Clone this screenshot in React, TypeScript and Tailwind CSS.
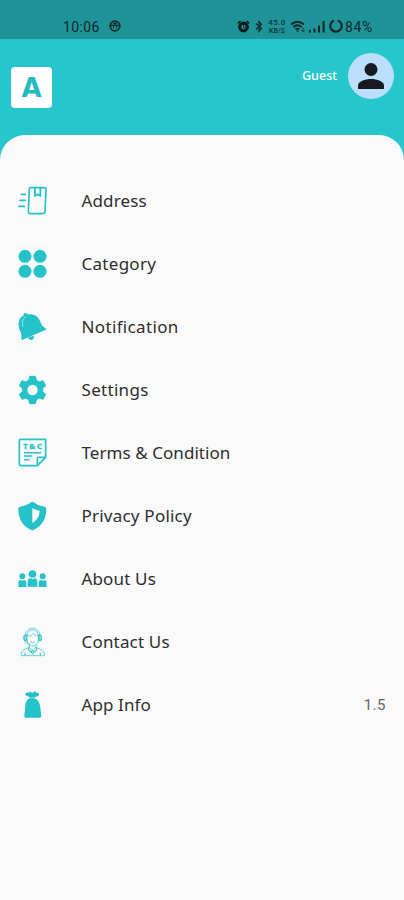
import type { ReactNode } from "react";

interface MenuItem {
  label: string;
  tracking: string;
  icon: ReactNode;
  value?: string;
}

const TEAL = "#26c2c9";

const AddressIcon = () => (
  <g fill="none" stroke={TEAL} strokeWidth={5} strokeLinecap="round" strokeLinejoin="round">
    <path d="M39 5h39q6 0 6 6l-3 65q-1 7-8 7H37q-6 0-6-7l3-65q0-6 5-6Z" />
    <path d="M51 5v25l8-5 8 5V5" strokeWidth={5.5} />
    <path d="M10 25h12M6 43h15M3 61h16" strokeWidth={5.5} />
  </g>
);

const CategoryIcon = () => (
  <g fill={TEAL}>
    <circle cx={21} cy={22} r={19.5} />
    <circle cx={66} cy={22} r={19.5} />
    <circle cx={21} cy={67} r={19.5} />
    <circle cx={66} cy={67} r={19.5} />
  </g>
);

const BellIcon = () => (
  <g>
    <path
      fill={TEAL}
      d="M17 6c3-4 9-4 11 1 17-3 33 5 38 20 4 11 8 17 17 22 3 2 2 4-1 5L14 83c-4 1-5-1-4-4 2-11-2-17-6-27C-1 35 2 16 16 11Z"
    />
    <path fill={TEAL} d="m30 77 17-6c3 5 0 10-4 12-5 2-11 0-13-6Z" />
    <path d="M15 43c-5-12-1-23 8-28" fill="none" stroke="#a9e8eb" strokeWidth={3} strokeLinecap="round" />
  </g>
);

const SettingsIcon = () => (
  <g fill={TEAL}>
    <path
      d="M35 4h17l3 12 9 5 11-4 8 15-9 8v10l9 8-8 15-11-4-9 5-3 12H35l-3-12-9-5-11 4-8-15 9-8V40l-9-8 8-15 11 4 9-5Z"
      stroke={TEAL}
      strokeWidth={3}
      strokeLinejoin="round"
    />
    <circle cx={43.5} cy={45} r={15.5} fill="#fafafa" />
  </g>
);

const TermsIcon = () => (
  <g fill="none" stroke={TEAL} strokeWidth={5} strokeLinejoin="round">
    <path d="M7 4h76v54L58 83H10q-6 0-6-6V8q0-4 3-4Z" />
    <path d="M83 58H61q-3 0-3 3v22" />
    <path d="M18 44h51M18 54h25M18 65h17" strokeWidth={4.5} />
    <text
      x={43.5}
      y={32}
      textAnchor="middle"
      textLength={56}
      fontSize={23}
      fontWeight={700}
      fill={TEAL}
      stroke={TEAL}
      strokeWidth={1}
    >
      T&amp;C
    </text>
  </g>
);

const PrivacyIcon = () => (
  <g>
    <path
      fill={TEAL}
      d="M39 4q4-3 8 0c9 7 20 12 33 13q5 1 5 6c0 29-11 50-37 63q-5 3-10 0C12 73 1 52 1 23q0-5 5-6C19 16 30 11 39 4Z"
    />
    <path fill="#fafafa" d="M43 21c7 5 13 7 22 8-1 17-8 29-22 37Z" />
  </g>
);

const AboutIcon = () => (
  <g fill={TEAL}>
    <circle cx={43.5} cy={30} r={11.5} />
    <circle cx={13} cy={37} r={9} />
    <circle cx={74} cy={37} r={9} />
    <path d="M29 68V53q0-10 10-10l5 3 5-3q9 0 9 10v15Z" />
    <path d="M1 69V57q0-9 8-9l4 3 4-3q8 0 8 9v12ZM62 69V57q0-9 8-9l4 3 4-3q8 0 8 9v12Z" />
  </g>
);

const ContactIcon = () => (
  <g fill="none" stroke={TEAL} strokeWidth={2.5} strokeLinecap="round" strokeLinejoin="round" opacity={0.85}>
    <path d="M22 24C24 10 33 4 44 4s20 7 22 20M27 24C30 13 35 9 44 9s14 4 17 15" />
    <path d="M27 23v14c0 11 8 20 17 20s17-9 17-20V23M28 27c9 1 15-2 19-8 3 5 8 8 13 8" />
    <path d="M25 24q-7-1-7 8t7 9ZM63 24q7-1 7 8t-7 9Z" strokeWidth={5} />
    <path d="M20 42q2 11 16 9M38 45q6 4 12 0" />
    <path d="M34 54v7l10 11 10-11v-7M34 61l-16 7q-9 4-9 18h71q0-14-10-18l-16-7" />
    <path d="m34 60-3 8 8 7 5-5 5 5 8-7-3-8M40 76l4 4 4-4M21 78v7M67 78v7" strokeWidth={3.5} />
  </g>
);

const InfoIcon = () => (
  <g fill={TEAL}>
    <path d="M36 23c-5-6-14-4-14-10 0-6 6-7 11-4 0-3 3-5 5-4l5 5 5-5c3-1 6 0 6 4 5-3 10 0 9 5-1 5-10 5-14 9Z" />
    <path d="M34 25h16c9 5 15 11 16 22l4 30q1 6-6 6H24q-6 0-5-6l3-30c1-11 4-17 12-22Z" />
  </g>
);

const items: MenuItem[] = [
  { label: "Address", tracking: "tracking-[0.12px]", icon: <AddressIcon /> },
  { label: "Category", tracking: "tracking-[0.28px]", icon: <CategoryIcon /> },
  { label: "Notification", tracking: "tracking-[0.35px]", icon: <BellIcon /> },
  { label: "Settings", tracking: "tracking-[0.3px]", icon: <SettingsIcon /> },
  { label: "Terms & Condition", tracking: "tracking-[0.06px]", icon: <TermsIcon /> },
  { label: "Privacy Policy", tracking: "tracking-[0.22px]", icon: <PrivacyIcon /> },
  { label: "About Us", tracking: "tracking-[0.15px]", icon: <AboutIcon /> },
  { label: "Contact Us", tracking: "tracking-[0.18px]", icon: <ContactIcon /> },
  { label: "App Info", tracking: "tracking-[0.1px]", icon: <InfoIcon />, value: "1.5" },
];

function StatusBar() {
  return (
    <div className="flex h-[39px] items-end bg-[#1e9398] pb-[4px] pl-[63px] text-[#10282a]">
      <span className="w-[46px] font-[Roboto] text-[14px] leading-[15px] tracking-[0.4px]">10:06</span>
      <svg className="mb-[3px] h-3 w-3" viewBox="0 0 12 12" fill="none" stroke="currentColor" strokeWidth={1.7}>
        <circle cx={6} cy={6} r={4.8} />
        <path d="M2 5.5h8M4 7.5h1M7 7.5h1M4 3.5h4" />
      </svg>
      <div className="ml-[116px] flex items-end">
        {/* alarm */}
        <svg className="mb-[2px] h-[13px] w-[13px]" viewBox="0 0 13 13" fill="none" stroke="#071b1c">
          <circle cx={6.5} cy={7} r={3.8} strokeWidth={3.2} />
          <path d="M1 3.3 3.5 1M12 3.3 9.5 1" strokeWidth={1.6} />
          <path d="M6.5 5v2.3L8 8" strokeWidth={0.8} />
        </svg>
        {/* bluetooth */}
        <svg className="mb-[2px] ml-[5px] h-[13px] w-2" viewBox="0 0 8 13" fill="none" stroke="currentColor">
          <path d="m1 3.5 5.5 5L4 11.5v-10l2.500 3L1 9.500" strokeWidth={1.2} />
        </svg>
        {/* network speed */}
        <div className="ml-[4px] flex w-[20px] flex-col items-center font-[Roboto] text-[#10282a]/90">
          <span className="text-[8px] leading-[8px] font-medium tracking-[0.4px]">45.0</span>
          <span className="text-[7px] leading-[8px] font-medium">KB/S</span>
        </div>
        {/* wifi */}
        <svg className="mb-[2px] ml-[3px] h-[13px] w-4" viewBox="0 0 16 13" fill="none" stroke="currentColor">
          <path d="M1 4.500Q7.500-1 14 4.500M3.300 7q4.200-3.500 8.400 0M5.500 9.300q2-1.500 4 0" strokeWidth={1.7} />
          <circle cx={7.5} cy={11} r={1} fill="currentColor" stroke="none" />
          <path d="M13 7.500v4m-1.500-1.300L13 11.700l1.500-1.500" strokeWidth={0.8} />
        </svg>
        {/* signal */}
        <svg className="mb-[2px] ml-[3px] h-[13px] w-4" viewBox="0 0 16 13" fill="currentColor">
          <path d="M0 10h2v2.500H0zM4.500 8.500h2v4h-2zM9 5.500h2v7H9zM13.500 1h2.200v11.500h-2.200z" />
        </svg>
        {/* battery */}
        <svg className="mb-[2px] ml-[4px] h-[14px] w-[14px]" viewBox="0 0 13 13" fill="none" stroke="currentColor">
          <path d="M4.600 1.500A5.300 5.300 0 1 0 8.100 1.400" strokeWidth={2} />
        </svg>
        <span className="ml-[2px] font-[Roboto] text-[14px] leading-[15px] tracking-[0.6px]">84%</span>
      </div>
    </div>
  );
}

function Header() {
  return (
    <header className="flex h-[96px] items-start justify-between pr-[10px] pl-[11px]">
      <div className="mt-7 flex h-[41px] w-[41px] items-center justify-center rounded-[4px] bg-white">
        <span className="pt-px font-['DejaVu_Sans'] text-[26px] leading-none font-bold text-[#26b9bf]">A</span>
      </div>
      <div className="mt-[14px] flex items-center">
        <span className="pt-px font-['Noto_Sans'] text-[12.5px] font-medium text-white">Guest</span>
        <div className="ml-[11px] flex h-[46px] w-[46px] items-center justify-center rounded-full bg-[#bbdefb]">
          <svg className="h-[26px] w-[26px]" viewBox="0 0 26 26" fill="#171a20">
            <circle cx={13} cy={6.5} r={6.5} />
            <path d="M0 26v-3.500C0 18.500 7 16 13 16s13 2.500 13 6.500V26Z" />
          </svg>
        </div>
      </div>
    </header>
  );
}

export default function App() {
  return (
    <div className="flex h-[900px] w-[404px] flex-col overflow-hidden bg-[#26c6cc] font-['Noto_Sans',sans-serif]">
      <StatusBar />
      <Header />
      <main className="flex-1 rounded-t-[25px] bg-[#fafafa] pt-[34px]">
        <ul>
          {items.map((item) => (
            <li key={item.label} className="flex h-[63px] items-center px-[18px]">
              <svg className="h-[30px] w-[30px] shrink-0" viewBox="0 0 90 90">
                {item.icon}
              </svg>
              <span className={`ml-[33.5px] flex-1 pt-px text-[17px] text-[#2e2e2e] ${item.tracking}`}>
                {item.label}
              </span>
              {item.value && (
                <span className="pt-px font-[Roboto] text-[15px] tracking-[0.5px] text-[#666]">{item.value}</span>
              )}
            </li>
          ))}
        </ul>
      </main>
    </div>
  );
}
